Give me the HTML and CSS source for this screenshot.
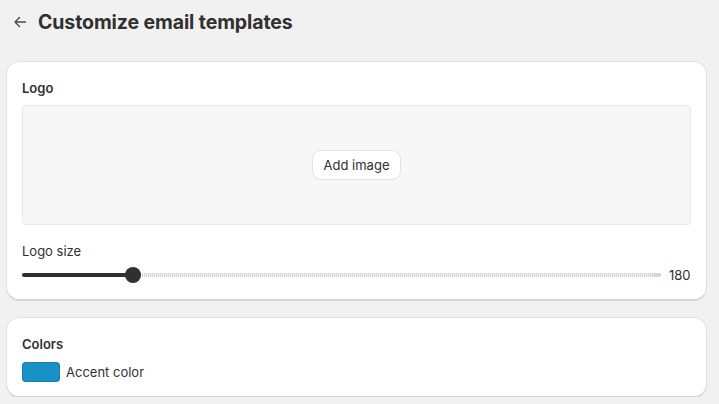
FILE: index.html
```html
<!DOCTYPE html>
<html>
<head>
<meta charset="utf-8">
<link rel="stylesheet" href="styles.css">
</head>
<body>
<div class="page">
  <header class="header">
    <button class="back" aria-label="Back">
      <svg width="14" height="14" viewBox="0 0 14 14"><path d="M12.5 7H2M6.5 2.5 2 7l4.5 4.5" fill="none" stroke="#4a4a4a" stroke-width="1.4" stroke-linecap="round" stroke-linejoin="round"/></svg>
    </button>
    <h1 class="title">Customize email templates</h1>
  </header>

  <section class="card card-logo">
    <h2 class="card-title">Logo</h2>
    <div class="dropzone">
      <button class="btn">Add image</button>
    </div>
    <div class="field-label">Logo size</div>
    <div class="slider-row">
      <div class="slider">
        <div class="slider-fill" style="width: 111px"></div>
        <div class="slider-thumb" style="left: 111px"></div>
      </div>
      <span class="slider-value">180</span>
    </div>
  </section>

  <section class="card card-colors">
    <h2 class="card-title">Colors</h2>
    <div class="color-row">
      <span class="swatch"></span>
      <span class="color-label">Accent color</span>
    </div>
  </section>
</div>
</body>
</html>
```

FILE: styles.css
```css
* { box-sizing: border-box; }
html, body { margin: 0; padding: 0; }
body {
  background: #f1f1f1;
  font-family: Inter, "Noto Sans", "Liberation Sans", sans-serif;
  color: #303030;
  font-size: 13px;
}
.page {
  padding: 0 13px 0 7px;
  display: flex;
  flex-direction: column;
}
.header {
  height: 44px;
  display: flex;
  align-items: center;
  gap: 8px;
  padding-left: 3px;
  margin-bottom: 18px;
}
.back {
  width: 20px;
  height: 20px;
  border: 0;
  background: transparent;
  padding: 0;
  display: flex;
  align-items: center;
  justify-content: center;
}
.title {
  margin: 0;
  font-size: 19.5px;
  line-height: 24px;
  font-weight: 650;
  color: #303030;
  letter-spacing: -0.1px;
}
.card {
  background: #fff;
  border-radius: 12px;
  box-shadow: 0 1px 0 0 rgba(26,26,26,0.07), 0 0 0 1px rgba(0,0,0,0.06), inset 0 -1px 0 0 #d4d4d4;
  padding: 16px 15px 15px 15px;
  display: flex;
  flex-direction: column;
}
.card-logo { margin-bottom: 18px; }
.card-title {
  margin: 0;
  font-size: 13px;
  line-height: 20px;
  font-weight: 600;
  color: #303030;
}
.dropzone {
  margin-top: 7px;
  height: 120px;
  background: #f7f7f7;
  border: 1px solid #e9e9e9;
  border-radius: 4px;
  display: flex;
  align-items: center;
  justify-content: center;
}
.btn {
  font-family: inherit;
  font-size: 13px;
  font-weight: 400;
  color: #303030;
  background: #fff;
  border: 0;
  border-radius: 8px;
  height: 28px;
  padding: 0 11px;
  box-shadow: 0 0 0 1px #e3e3e3, 0 1px 0 0 #cfcfcf;
}
.field-label {
  margin-top: 16px;
  line-height: 20px;
  font-size: 13px;
  color: #303030;
}
.slider-row {
  margin-top: 4px;
  height: 20px;
  display: flex;
  align-items: center;
  gap: 8px;
}
.slider {
  position: relative;
  flex: 1;
  height: 4px;
  border-radius: 2px;
  background: repeating-linear-gradient(90deg, #d6d6d6 0 1px, #f1f1f1 1px 2px);
}
.slider::after {
  content: "";
  position: absolute;
  right: 0;
  top: 0;
  width: 8px;
  height: 4px;
  border-radius: 2px;
  background: #d6d6d6;
}
.slider-fill {
  position: absolute;
  left: 0;
  top: 0;
  height: 4px;
  border-radius: 2px;
  background: #303030;
}
.slider-thumb {
  position: absolute;
  top: 50%;
  width: 16px;
  height: 16px;
  margin-left: -8px;
  margin-top: -8px;
  border-radius: 50%;
  background: #303030;
}
.slider-value {
  width: 22px;
  font-size: 13px;
  color: #303030;
}
.color-row {
  margin-top: 8px;
  display: flex;
  align-items: center;
  gap: 6px;
}
.swatch {
  width: 38px;
  height: 20px;
  border-radius: 4px;
  background: #1990c6;
  box-shadow: inset 0 0 0 1px rgba(0,0,0,0.12);
}
.color-label {
  font-size: 13px;
  color: #303030;
}
```
